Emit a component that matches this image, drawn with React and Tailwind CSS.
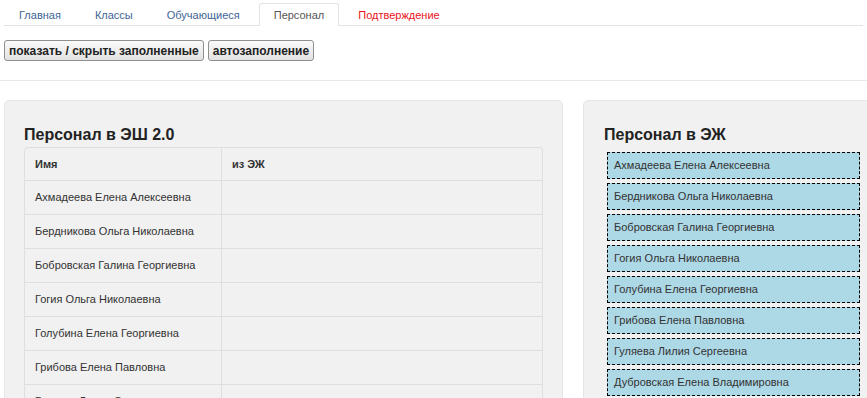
import { useState } from "react";

const tabs = ["Главная", "Классы", "Обучающиеся", "Персонал", "Подтверждение"];

const staff = [
  "Ахмадеева Елена Алексеевна",
  "Бердникова Ольга Николаевна",
  "Бобровская Галина Георгиевна",
  "Гогия Ольга Николаевна",
  "Голубина Елена Георгиевна",
  "Грибова Елена Павловна",
  "Гуляева Лилия Сергеевна",
  "Дубровская Елена Владимировна",
];

export default function App() {
  const [active, setActive] = useState("Персонал");

  return (
    <div className="w-full h-[398px] overflow-hidden bg-white font-['Liberation_Sans',Arial,sans-serif] text-[#333]">
      {/* tabs */}
      <div className="pt-[2px] px-[4px]">
        <ul className="flex gap-[4px] border-b border-[#e3e3e3]">
          {tabs.map((t) => {
            const isActive = t === active;
            const isRed = t === "Подтверждение";
            return (
              <li key={t} className="-mb-px">
                <button
                  onClick={() => setActive(t)}
                  className={
                    "h-[23px] px-[14px] text-[11px] leading-[22px] rounded-t-[3px] border " +
                    (isActive
                      ? "bg-white border-[#e3e3e3] border-b-white text-[#555]"
                      : "border-transparent " + (isRed ? "text-[#e8131b]" : "text-[#3e6496]"))
                  }
                >
                  {t}
                </button>
              </li>
            );
          })}
        </ul>
      </div>

      {/* actions */}
      <div className="flex gap-[4px] px-[4px] mt-[14px]">
        <button className="h-[21px] px-[4px] text-[12px] font-bold text-[#222] border border-[#8f8f8f] rounded-[3px] bg-gradient-to-b from-[#fafafa] to-[#e2e2e2]">
          показать / скрыть заполненные
        </button>
        <button className="h-[21px] px-[4px] text-[12px] font-bold text-[#222] border border-[#8f8f8f] rounded-[3px] bg-gradient-to-b from-[#fafafa] to-[#e2e2e2]">
          автозаполнение
        </button>
      </div>

      <div className="mt-[19px] border-t border-[#e8e8e8]" />

      {/* panels */}
      <div className="flex gap-[20px] px-[4px] mt-[19px] w-[1000px]">
        <div className="w-[559px] shrink-0 bg-[#f1f1f1] border border-[#e6e6e6] rounded-t-[5px] pl-[19px] pr-[19px] pt-[23px]">
          <h2 className="text-[16px] font-bold text-[#222] leading-[22px]">Персонал в ЭШ 2.0</h2>
          <table className="mt-[1px] w-full border-separate border-spacing-0 text-[11px]">
            <thead>
              <tr>
                <th className="w-[198px] h-[34px] text-left font-bold px-[10px] border border-[#dedede] rounded-tl-[4px]">
                  Имя
                </th>
                <th className="h-[34px] text-left font-bold px-[10px] border border-l-0 border-[#dedede] rounded-tr-[4px]">
                  из ЭЖ
                </th>
              </tr>
            </thead>
            <tbody>
              {staff.map((n) => (
                <tr key={n}>
                  <td className="h-[34px] px-[10px] border border-t-0 border-[#dedede]">{n}</td>
                  <td className="h-[34px] px-[10px] border border-t-0 border-l-0 border-[#dedede]" />
                </tr>
              ))}
            </tbody>
          </table>
        </div>

        <div className="w-[320px] shrink-0 bg-[#f1f1f1] border border-[#e6e6e6] rounded-t-[5px] pl-[20px] pt-[23px]">
          <h2 className="text-[16px] font-bold text-[#222] leading-[22px]">Персонал в ЭЖ</h2>
          <div className="mt-[6px] ml-[3px] flex flex-col gap-[4px] w-[253px]">
            {staff.map((n) => (
              <div
                key={n}
                className="h-[27px] bg-[#add8e6] border border-dashed border-black px-[6px] text-[11px] leading-[25px] text-[#333]"
              >
                {n}
              </div>
            ))}
          </div>
        </div>
      </div>
    </div>
  );
}
